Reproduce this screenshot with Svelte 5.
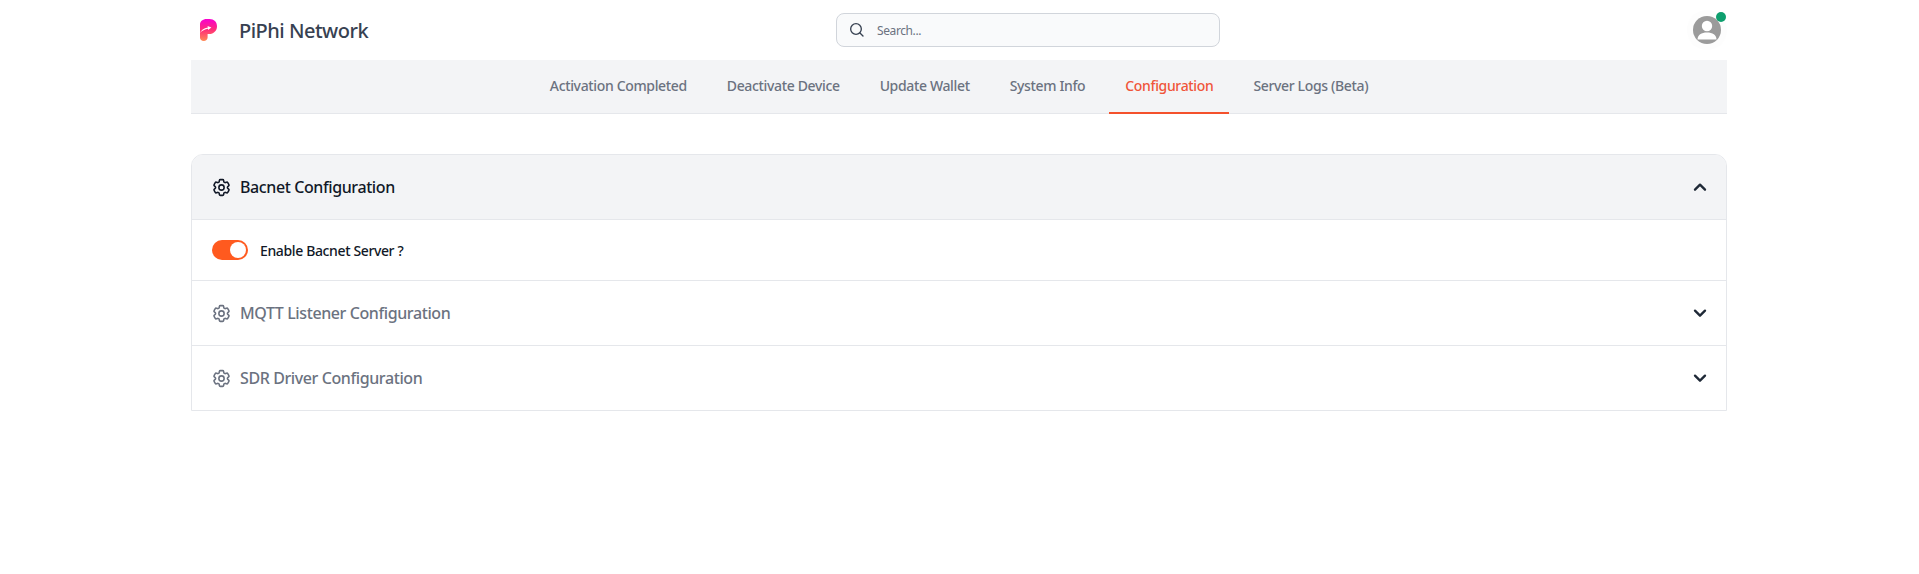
<script>
  const tabs = [
    { label: 'Activation Completed' },
    { label: 'Deactivate Device' },
    { label: 'Update Wallet' },
    { label: 'System Info' },
    { label: 'Configuration', active: true },
    { label: 'Server Logs (Beta)' }
  ];
  const gear = 'M9.594 3.94c.09-.542.56-.94 1.11-.94h2.593c.55 0 1.02.398 1.11.94l.213 1.281c.063.374.313.686.645.87.074.04.147.083.22.127.324.196.72.257 1.075.124l1.217-.456a1.125 1.125 0 011.37.49l1.296 2.247a1.125 1.125 0 01-.26 1.431l-1.003.827c-.293.24-.438.613-.431.992a6.759 6.759 0 010 .255c-.007.378.138.75.43.99l1.005.828c.424.35.534.954.26 1.43l-1.298 2.247a1.125 1.125 0 01-1.369.491l-1.217-.456c-.355-.133-.75-.072-1.076.124a6.57 6.57 0 01-.22.128c-.331.183-.581.495-.644.869l-.213 1.28c-.09.543-.56.941-1.11.941h-2.594c-.55 0-1.02-.398-1.11-.94l-.213-1.281c-.062-.374-.312-.686-.644-.87a6.52 6.52 0 01-.22-.127c-.325-.196-.72-.257-1.076-.124l-1.217.456a1.125 1.125 0 01-1.369-.49l-1.297-2.247a1.125 1.125 0 01.26-1.431l1.004-.827c.292-.24.437-.613.43-.992a6.932 6.932 0 010-.255c.007-.378-.138-.75-.43-.99l-1.004-.828a1.125 1.125 0 01-.26-1.43l1.297-2.247a1.125 1.125 0 011.37-.491l1.216.456c.356.133.751.072 1.076-.124.072-.044.146-.087.22-.128.332-.183.582-.495.644-.869l.214-1.281z';
</script>

<div class="page">
  <header class="topbar">
    <div class="brand">
      <svg class="logo" viewBox="0 0 17 22" width="17" height="22" aria-hidden="true">
        <defs>
          <linearGradient id="pg" x1="0" y1="0" x2="0" y2="1">
            <stop offset="0" stop-color="#f800d0" />
            <stop offset="0.5" stop-color="#ff2f78" />
            <stop offset="1" stop-color="#ff8a55" />
          </linearGradient>
        </defs>
        <path fill="url(#pg)" d="M0 5.5C0 2.3 3 0 6.5 0H9.5C14 0 17 3 17 7.2C17 11.8 13.6 15 9.2 15H7.6V18.5C7.6 20.8 5.8 22 3.8 22C1.6 22 0 20.6 0 18.5Z" />
        <path fill="#fff" d="M0 14C1 11.2 3.6 9 7.9 8.4L7.5 7 11.4 8.6 8.1 11 8 9.8C5 10.3 2 11.6 0 14Z" />
      </svg>
      <span class="brand-name">PiPhi Network</span>
    </div>

    <label class="search">
      <svg viewBox="0 0 24 24" width="16" height="16" fill="none" stroke="#374151" stroke-width="2" stroke-linecap="round" aria-hidden="true">
        <circle cx="10.5" cy="10.5" r="8" />
        <path d="M16.5 16.5L21 21" />
      </svg>
      <input type="text" placeholder="Search..." />
    </label>

    <div class="avatar">
      <svg viewBox="0 0 40 40" width="40" height="40" aria-hidden="true">
        <circle cx="20" cy="20" r="20" fill="#fdfdfd" />
        <clipPath id="ac"><circle cx="20" cy="20" r="14" /></clipPath>
        <circle cx="20" cy="20" r="14" fill="#9b9b9b" />
        <g clip-path="url(#ac)">
          <circle cx="20" cy="16" r="5.2" fill="#fff" />
          <path d="M10.5 29.5C10.5 25 14.5 22.5 20 22.5S29.5 25 29.5 29.5Z" fill="#fff" />
        </g>
      </svg>
      <span class="online"></span>
    </div>
  </header>

  <nav class="tabs">
    {#each tabs as t}
      <a href="#top" class="tab" class:active={t.active}>{t.label}</a>
    {/each}
  </nav>

  <section class="accordion">
    <div class="acc-head open">
      <span class="acc-title">
        <svg class="gear" viewBox="0 0 24 24" width="21" height="21" fill="none" stroke="currentColor" stroke-width="1.8" stroke-linecap="round" stroke-linejoin="round" aria-hidden="true">
          <path d={gear} /><circle cx="12" cy="12" r="3" />
        </svg>
        Bacnet Configuration
      </span>
      <svg class="chev" viewBox="0 0 24 24" width="16" height="16" fill="none" stroke="currentColor" stroke-width="3.5" stroke-linecap="round" stroke-linejoin="round" aria-hidden="true"><path d="M4.5 16l7.5-7.5 7.5 7.5" /></svg>
    </div>
    <div class="acc-body">
      <span class="toggle"><span class="knob"></span></span>
      <span class="toggle-label">Enable Bacnet Server ?</span>
    </div>
    <div class="acc-head">
      <span class="acc-title">
        <svg class="gear" viewBox="0 0 24 24" width="21" height="21" fill="none" stroke="currentColor" stroke-width="1.8" stroke-linecap="round" stroke-linejoin="round" aria-hidden="true">
          <path d={gear} /><circle cx="12" cy="12" r="3" />
        </svg>
        MQTT Listener Configuration
      </span>
      <svg class="chev" viewBox="0 0 24 24" width="16" height="16" fill="none" stroke="currentColor" stroke-width="3.5" stroke-linecap="round" stroke-linejoin="round" aria-hidden="true"><path d="M19.5 8.5L12 16 4.5 8.5" /></svg>
    </div>
    <div class="acc-head">
      <span class="acc-title">
        <svg class="gear" viewBox="0 0 24 24" width="21" height="21" fill="none" stroke="currentColor" stroke-width="1.8" stroke-linecap="round" stroke-linejoin="round" aria-hidden="true">
          <path d={gear} /><circle cx="12" cy="12" r="3" />
        </svg>
        SDR Driver Configuration
      </span>
      <svg class="chev" viewBox="0 0 24 24" width="16" height="16" fill="none" stroke="currentColor" stroke-width="3.5" stroke-linecap="round" stroke-linejoin="round" aria-hidden="true"><path d="M19.5 8.5L12 16 4.5 8.5" /></svg>
    </div>
  </section>
</div>

<style>
  :global(body) {
    margin: 0;
    background: #fff;
  }
  .page {
    width: 1536px;
    margin-left: 191px;
    font-family: "Noto Sans", "Open Sans", sans-serif;
    font-weight: 500;
  }
  .topbar {
    height: 60px;
    display: grid;
    grid-template-columns: 645px 384px 1fr;
    align-items: center;
  }
  .brand {
    display: flex;
    align-items: center;
    padding-left: 9px;
    gap: 22px;
  }
  .brand-name {
    font-size: 20px;
    color: #374151;
    letter-spacing: -0.5px;
    line-height: 28px;
    padding-top: 2px;
  }
  .search {
    height: 34px;
    box-sizing: border-box;
    display: flex;
    align-items: center;
    gap: 12px;
    padding-left: 12px;
    background: #f9fafb;
    border: 1px solid #d1d5db;
    border-radius: 8px;
  }
  .search input {
    border: 0;
    outline: 0;
    background: transparent;
    flex: 1;
    padding: 0;
    font: 400 12px "Noto Sans", sans-serif;
    letter-spacing: -0.4px;
    color: #111827;
  }
  .search input::placeholder {
    color: #6b7280;
    opacity: 1;
  }
  .avatar {
    justify-self: end;
    position: relative;
    width: 40px;
    height: 40px;
  }
  .avatar svg {
    display: block;
  }
  .online {
    position: absolute;
    top: 2px;
    right: 1px;
    width: 10px;
    height: 10px;
    border-radius: 50%;
    background: #0e9f6e;
  }
  .tabs {
    height: 54px;
    box-sizing: border-box;
    display: flex;
    justify-content: center;
    gap: 8px;
    background: #f3f4f6;
    border-bottom: 1px solid #e5e7eb;
  }
  .tab {
    display: flex;
    align-items: center;
    height: 54px;
    box-sizing: border-box;
    padding: 0 16px 2px;
    border-bottom: 2px solid transparent;
    font-size: 14px;
    color: #6b7280;
    text-decoration: none;
    letter-spacing: -0.35px;
  }
  .tab.active {
    color: #f0553a;
    border-bottom-color: #f4512c;
  }
  .accordion {
    margin-top: 40px;
    border: 1px solid #e5e7eb;
    border-radius: 12px 12px 0 0;
    overflow: hidden;
  }
  .acc-head {
    height: 65px;
    box-sizing: border-box;
    display: flex;
    align-items: center;
    justify-content: space-between;
    padding: 0 18px 0 20px;
    color: #6b7280;
    font-size: 16px;
    border-top: 1px solid #e5e7eb;
  }
  .acc-head:first-child {
    border-top: 0;
  }
  .acc-head.open {
    background: #f3f4f6;
    color: #111827;
    height: 64px;
  }
  .acc-title {
    display: flex;
    align-items: center;
    gap: 8px;
    letter-spacing: -0.4px;
  }
  .gear {
    margin-left: -1px;
  }
  .chev {
    color: #1f2937;
  }
  .acc-body {
    height: 61px;
    box-sizing: border-box;
    display: flex;
    align-items: center;
    gap: 12px;
    padding: 0 20px;
    border-top: 1px solid #e5e7eb;
  }
  .toggle {
    width: 36px;
    height: 20px;
    border-radius: 10px;
    background: #ff5a1f;
    display: flex;
    align-items: center;
    justify-content: flex-end;
    padding-right: 2px;
    box-sizing: border-box;
  }
  .knob {
    width: 16px;
    height: 16px;
    border-radius: 50%;
    background: #fff;
  }
  .toggle-label {
    font-size: 14px;
    color: #111827;
    letter-spacing: -0.37px;
  }
</style>
